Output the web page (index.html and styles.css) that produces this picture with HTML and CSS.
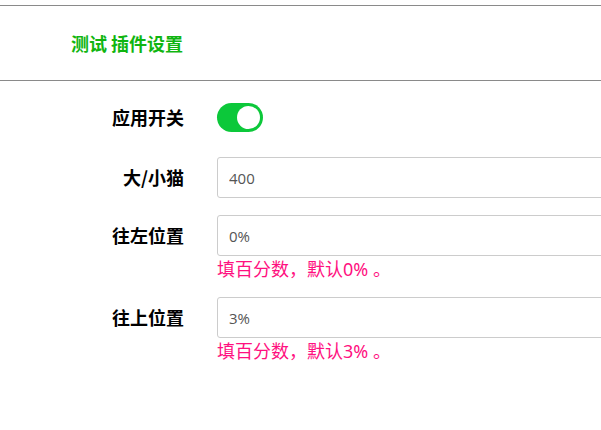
FILE: index.html
```html
<!DOCTYPE html>
<html lang="zh-CN">
<head>
    <meta charset="UTF-8">
    <meta name="viewport" content="width=device-width, initial-scale=1.0">
    <title>测试 插件设置</title>
    <link rel="stylesheet" href="styles.css">
</head>
<body>
    <header class="top">
        <h1>测试 插件设置</h1>
    </header>

    <div class="form">
        <div class="row first">
            <label class="label">应用开关</label>
            <div class="field">
                <div class="ctl">
                    <span class="switch on"><span class="knob"></span></span>
                </div>
            </div>
        </div>
        <div class="row">
            <label class="label">大/小猫</label>
            <div class="field">
                <input class="text" type="text" value="400">
            </div>
        </div>
        <div class="row">
            <label class="label">往左位置</label>
            <div class="field">
                <input class="text" type="text" value="0%">
                <p class="hint">填百分数，默认0% 。</p>
            </div>
        </div>
        <div class="row">
            <label class="label">往上位置</label>
            <div class="field">
                <input class="text" type="text" value="3%">
                <p class="hint">填百分数，默认3% 。</p>
            </div>
        </div>
    </div>
</body>
</html>
```
FILE: styles.css
```css
html, body { overflow: hidden; }
body { margin: 0; padding: 0; font-family: "Noto Sans", "Noto Sans CJK SC", sans-serif; background: #fff; }
.top { margin-top: 5px; border-top: 1px solid #8a8a8a; border-bottom: 1px solid #8a8a8a; height: 74px; display: flex; align-items: center; padding-left: 71px; }
.top h1 { margin: 0; font-size: 18px; font-weight: bold; color: #10b510; font-family: "Noto Sans CJK SC", sans-serif; line-height: 1; }
.form { padding-top: 16px; overflow: hidden; }
.row { display: flex; margin-bottom: 17px; }
.row.first { margin-bottom: 19px; }
.label { width: 184px; flex: none; text-align: right; font-weight: bold; font-size: 18px; color: #000; line-height: 41px; height: 41px; font-family: "Noto Sans CJK SC", sans-serif; }
.field { margin-left: 33px; flex: 1; min-width: 0; }
.ctl { height: 41px; display: flex; align-items: center; }
.switch { display: block; width: 46px; height: 29px; border-radius: 15px; background: #ccc; position: relative; }
.switch.on { background: #0cc83a; }
.knob { position: absolute; top: 3px; right: 3px; width: 23px; height: 23px; border-radius: 50%; background: #fff; }
.text { display: block; box-sizing: border-box; width: calc(100% + 20px); height: 41px; border: 1px solid #ccc; border-radius: 3px; padding: 0 11px; font-size: 15px; color: #555; font-family: "Open Sans", "Noto Sans", sans-serif; outline: none; }
.hint { margin: 2px 0 0; font-size: 18px; line-height: 22px; color: #ff1080; }
```
